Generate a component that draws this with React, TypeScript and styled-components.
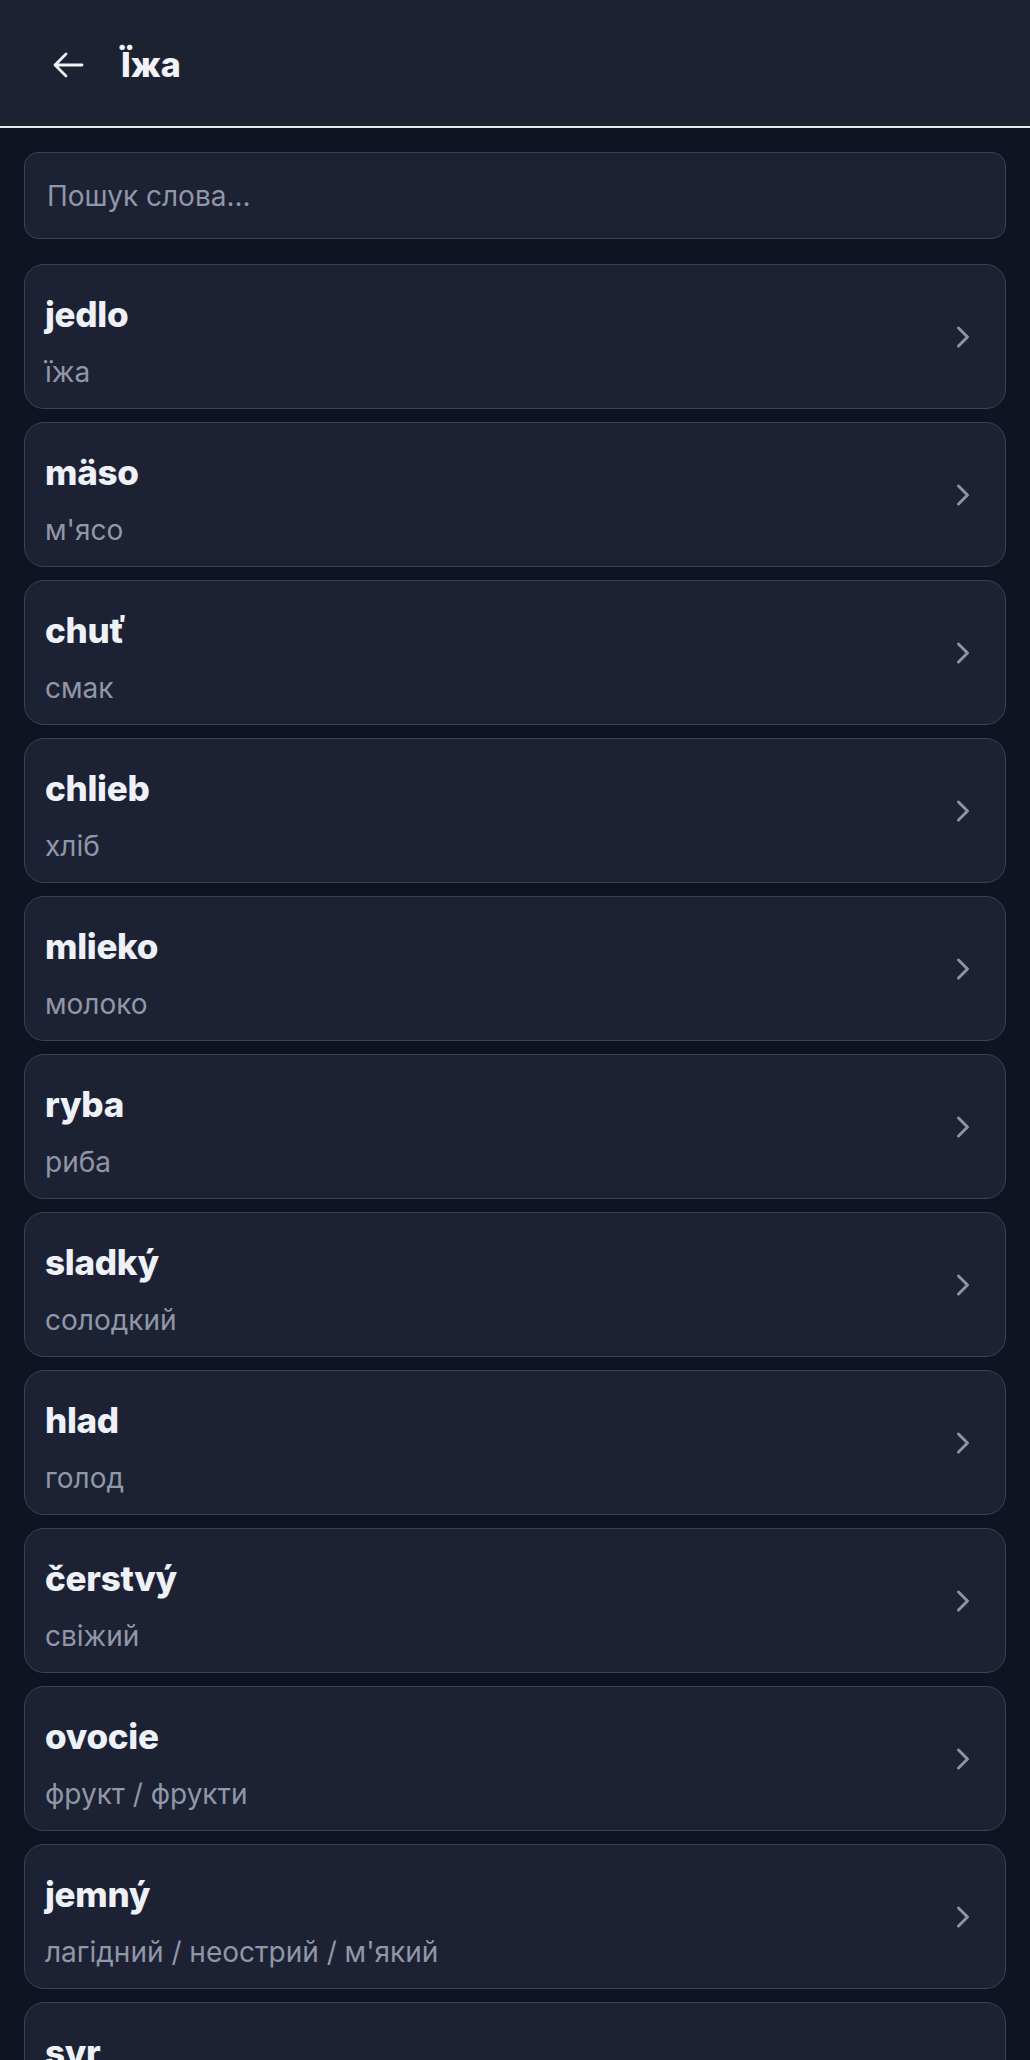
import styled, { createGlobalStyle } from "styled-components";

type Word = {
  sk: string;
  uk: string;
};

const Words: Word[] = [
  { sk: "jedlo", uk: "їжа" },
  { sk: "mäso", uk: "м'ясо" },
  { sk: "chuť", uk: "смак" },
  { sk: "chlieb", uk: "хліб" },
  { sk: "mlieko", uk: "молоко" },
  { sk: "ryba", uk: "риба" },
  { sk: "sladký", uk: "солодкий" },
  { sk: "hlad", uk: "голод" },
  { sk: "čerstvý", uk: "свіжий" },
  { sk: "ovocie", uk: "фрукт / фрукти" },
  { sk: "jemný", uk: "лагідний / неострий / м'який" },
  { sk: "syr", uk: "сир" },
];

const GlobalStyle = createGlobalStyle`
  * { box-sizing: border-box; }
  html, body {
    margin: 0;
    padding: 0;
    background: #0f1422;
    font-family: Inter, "Noto Sans", "DejaVu Sans", sans-serif;
  }
`;

const BackArrow = () => (
  <svg width="32" height="26" viewBox="0 0 32 26" fill="none">
    <path
      d="M30 13H3M14 2L3 13l11 11"
      stroke="#f1f3f8"
      strokeWidth="2.8"
      strokeLinecap="round"
      strokeLinejoin="round"
    />
  </svg>
);

const Chevron = () => (
  <svg width="36" height="36" viewBox="0 0 24 24" fill="none">
    <path
      d="m9 18 6-6-6-6"
      stroke="#8b93a6"
      strokeWidth="2"
      strokeLinecap="round"
      strokeLinejoin="round"
    />
  </svg>
);

export default function App() {
  return (
    <>
      <GlobalStyle />
      <Screen>
        <Header>
          <BackButton aria-label="back">
            <BackArrow />
          </BackButton>
          <Title>Їжа</Title>
        </Header>

        <Content>
          <Search placeholder="Пошук слова..." />

          <List>
            {Words.map((w: Word, index: number) => (
              <Card key={index}>
                <CardText>
                  <WordTitle>{w.sk}</WordTitle>
                  <Translation>{w.uk}</Translation>
                </CardText>
                <ChevronBox>
                  <Chevron />
                </ChevronBox>
              </Card>
            ))}
          </List>
        </Content>
      </Screen>
    </>
  );
}

const Screen = styled.div`
  height: 100vh;
  display: flex;
  flex-direction: column;
  overflow: hidden;
  background: #0f1422;
`;

const Header = styled.header`
  flex: 0 0 auto;
  height: 128px;
  display: flex;
  align-items: center;
  padding: 4px 0 0 52px;
  gap: 37px;
  background: #1c2232;
  border-bottom: 2px solid #e6e8ec;
`;

const BackButton = styled.button`
  display: flex;
  align-items: center;
  padding: 0;
  border: none;
  background: transparent;
  cursor: pointer;
`;

const Title = styled.h1`
  margin: 0;
  font-size: 34px;
  line-height: 40px;
  font-weight: 800;
  color: #f1f3f8;
`;

const Content = styled.main`
  flex: 1 1 auto;
  overflow-y: auto;
  scrollbar-width: none;
  padding: 24px 24px;
  &::-webkit-scrollbar {
    display: none;
  }
`;

const Search = styled.input`
  display: block;
  width: 100%;
  height: 87px;
  margin: 0 0 25px;
  padding: 0 22px;
  border: 1.5px solid #3a4254;
  border-radius: 14px;
  background: #1c2233;
  color: #e8ebf2;
  font-family: inherit;
  font-size: 28px;
  outline: none;

  &::placeholder {
    color: #8f97a8;
  }
`;

const List = styled.div`
  display: flex;
  flex-direction: column;
  gap: 13px;
`;

const Card = styled.div`
  height: 145px;
  display: flex;
  align-items: center;
  justify-content: space-between;
  padding: 0 24px 0 20px;
  border: 1.5px solid #3a4254;
  border-radius: 20px;
  background: #1c2233;
  cursor: pointer;
`;

const CardText = styled.div`
  display: flex;
  flex-direction: column;
  gap: 16px;
  padding-top: 10px;
`;

const WordTitle = styled.div`
  font-size: 35px;
  line-height: 44px;
  font-weight: 800;
  color: #eef1f7;
  letter-spacing: -0.3px;
`;

const Translation = styled.div`
  font-size: 28px;
  line-height: 40px;
  color: #8f97a8;
`;

const ChevronBox = styled.div`
  display: flex;
  align-items: center;
`;
